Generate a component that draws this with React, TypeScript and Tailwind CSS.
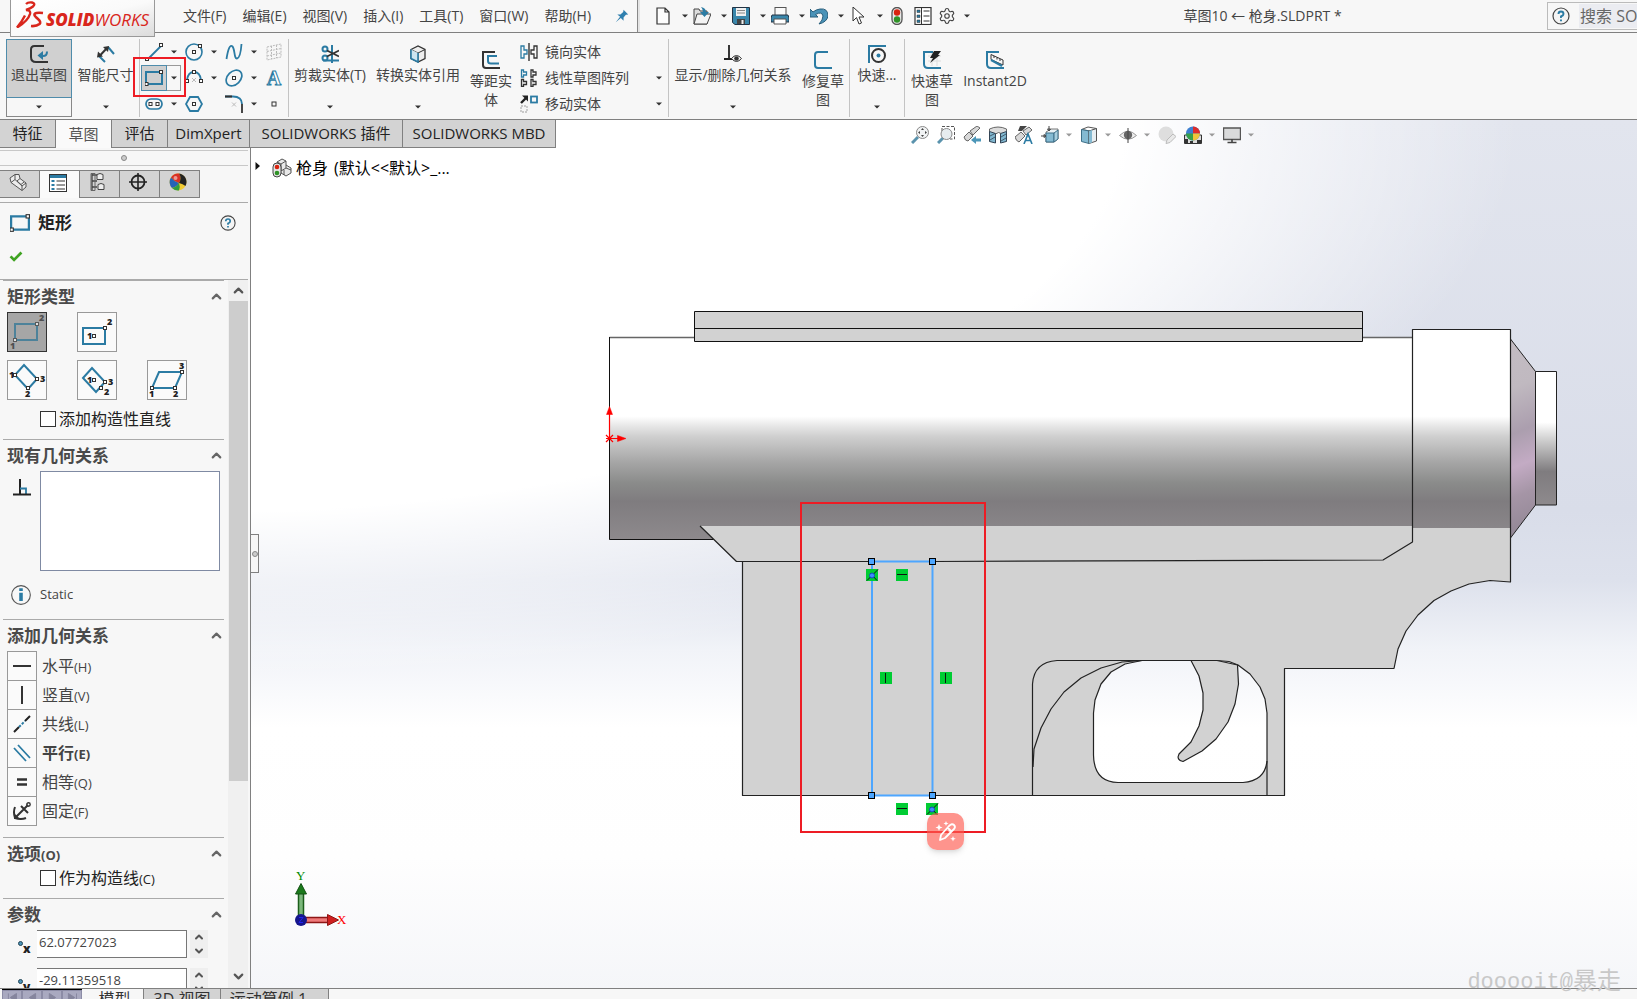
import type { ReactNode } from 'react';
import { ChevronDown, ChevronUp, Settings } from 'lucide-react';
import clsx from 'clsx';

const BLUE = '#2b7ba3';
const DARK = '#333333';

interface IconProps {
  children: ReactNode;
  className?: string;
}

function Icon({ children, className = 'size-[18px]' }: IconProps) {
  return (
    <svg viewBox="0 0 18 18" fill="none" className={clsx('shrink-0', className)} aria-hidden="true">
      {children}
    </svg>
  );
}

function Caret({ className = 'text-[#333]' }: { className?: string }) {
  return (
    <svg viewBox="0 0 6 4" className={clsx('h-1 w-1.5 shrink-0', className)} aria-hidden="true">
      <path d="M0 0.5h6L3 3.5z" fill="currentColor" />
    </svg>
  );
}

/** Small square end point used by most sketch icons */
function Node({ x, y }: { x: number; y: number }) {
  return <rect x={x - 1.5} y={y - 1.5} width="3" height="3" fill="#fff" stroke={DARK} />;
}

const icons = {
  exitSketch: (
    <>
      <path d="M14 1H4.500Q1 1 1 4.500V12q0 5 5 5h12" stroke={DARK} strokeWidth="2" />
      <path d="M17 6.500q0 4.500-4 4.500" stroke={BLUE} strokeWidth="2" />
      <path d="M7.500 10.500 13 6v9z" fill={BLUE} />
    </>
  ),
  dimension: (
    <>
      <path d="M2 11l6 6M11 2l6 7" stroke={BLUE} strokeWidth="2" />
      <path d="M3 10.500 10 3" stroke={DARK} strokeWidth="2" />
      <path d="M0 12.500l1-6 5 5zM12 1l-1 6-5-5z" fill={DARK} />
    </>
  ),
  line: (
    <>
      <path d="M2 17 17 2" stroke={BLUE} strokeWidth="1.800" />
      <Node x={2} y={16} />
      <Node x={16} y={2} />
    </>
  ),
  circle: (
    <>
      <circle cx="9" cy="9" r="8" stroke={BLUE} strokeWidth="1.600" />
      <Node x={9} y={9} />
      <Node x={15} y={3} />
    </>
  ),
  spline: <path d="M1.500 16C3 6 5 1 7.500 3.500S9 16 12 15.500 16 8 16.500 1" stroke={BLUE} strokeWidth="1.800" />,
  plane: (
    <path d="M2 4 16 1v13L2 17zM2 8.500l14-3M2 13l14-3M6.500 3v13M11.500 2v13" stroke="#bbb" strokeDasharray="2 1" />
  ),
  rect: (
    <>
      <path d="M1 3h16v12H1z" stroke={BLUE} strokeWidth="2" />
      <Node x={1.5} y={15} />
      <Node x={16} y={3} />
    </>
  ),
  arc: (
    <>
      <path d="M2 11Q3 3 9 3t7 8" stroke={BLUE} strokeWidth="1.800" />
      <path d="M7 9l4 4M11 9l-4 4" stroke="#bbb" />
      <Node x={9} y={3} />
      <Node x={2} y={12} />
      <Node x={16} y={12} />
    </>
  ),
  ellipse: (
    <>
      <ellipse cx="9" cy="9" rx="9" ry="6.500" transform="rotate(-45 9 9)" stroke={BLUE} strokeWidth="1.700" />
      <Node x={9} y={9} />
    </>
  ),
  slot: (
    <>
      <rect x="1" y="4" width="16" height="10" rx="5" stroke={BLUE} strokeWidth="1.700" />
      <Node x={5.5} y={9} />
      <Node x={12.5} y={9} />
    </>
  ),
  polygon: (
    <>
      <path d="M5 2h8l4 7-4 7H5L1 9z" stroke={BLUE} strokeWidth="1.800" />
      <Node x={9} y={9} />
    </>
  ),
  fillet: (
    <>
      <path d="M0 1.500h8Q17 1.500 17 9" stroke={BLUE} strokeWidth="1.800" />
      <path d="M0 1.500h7M17 9v9" stroke={DARK} strokeWidth="1.800" />
      <path d="M7 7.500l4 4M11 7.500l-4 4" stroke="#bbb" />
    </>
  ),
  point: <rect x="7" y="7" width="4" height="4" stroke={DARK} />,
  trim: (
    <>
      <circle cx="4" cy="4" r="2.500" stroke={BLUE} strokeWidth="2" />
      <circle cx="4" cy="13" r="2.500" stroke={BLUE} strokeWidth="2" />
      <path d="M11 0v18M2 15.500h16" stroke={BLUE} strokeWidth="2" />
      <path d="M6 5.500l12 6M6 11.500l12-6" stroke={DARK} strokeWidth="1.800" />
    </>
  ),
  convert: (
    <>
      <path d="M2 4.500 9 1l7 3.500v9L9 17l-7-3.500z" fill="#eee" stroke={DARK} strokeWidth="1.300" />
      <path d="M2 4.500 9 8l7-3.500M9 8v9" stroke={DARK} />
      <path d="M9 8v9l-7-3.500v-9" fill="#cde4ef" stroke={BLUE} strokeWidth="1.600" />
    </>
  ),
  offset: (
    <>
      <path d="M13 1H1v13q0 3 3 3h14" stroke={DARK} strokeWidth="2" />
      <path d="M15 5H6v5q0 2.500 3 2.500h8" stroke={BLUE} strokeWidth="2" />
    </>
  ),
  mirror: (
    <>
      <path d="M9 0v18" stroke={DARK} strokeWidth="1.400" />
      <path d="M1 3h3v4h3v4H4v4H1z" stroke={BLUE} strokeWidth="1.300" />
      <path d="M17 3h-3v4h-3v4h3v4h3z" stroke={DARK} strokeWidth="1.300" />
    </>
  ),
  pattern: (
    <>
      <path d="M1.500 1h2v2h3v3h-3v2h-2z" stroke={BLUE} strokeWidth="1.300" />
      <path
        d="M11 1h2v2h3v3h-3v2h-2zM1.500 10.500h2v2h3v3h-3v2h-2zM11 10.500h2v2h3v3h-3v2h-2z"
        stroke={DARK}
        strokeWidth="1.300"
      />
    </>
  ),
  move: (
    <>
      <path d="M1 8l5-5" stroke="#222" strokeWidth="2.400" />
      <path d="M2 0.500h6v6z" fill="#222" />
      <rect x="11" y="1.500" width="6" height="6" stroke={BLUE} strokeWidth="1.800" />
      <rect x="1" y="11" width="6" height="6" stroke="#bbb" strokeWidth="1.400" strokeDasharray="2 1" />
    </>
  ),
  relations: (
    <>
      <path d="M5 0v14M0 14h10" stroke="#222" strokeWidth="1.800" />
      <path d="M7.500 13.500q5-6 10 0-5 6-10 0z" fill="#fff" stroke={DARK} />
      <circle cx="12.500" cy="13.500" r="2.300" fill={DARK} />
    </>
  ),
  repair: <path d="M14 1H4q-3 0-3 3v10q0 3 3 3h14" stroke={BLUE} strokeWidth="2" />,
  snap: (
    <>
      <path d="M1 18V1h17" stroke={BLUE} strokeWidth="2" />
      <circle cx="10.500" cy="10.500" r="6.500" stroke={DARK} strokeWidth="2" />
      <circle cx="10.500" cy="10.500" r="2" fill={BLUE} />
    </>
  ),
  rapid: (
    <>
      <path d="M5 5h13M5 10h13M9 2v13M14 2v13" stroke="#ddd" />
      <path d="M10 1H1v12q0 4 4 4h13" stroke={BLUE} strokeWidth="2" />
      <path d="M11 0h7l-3 4h2L7 12l3-5H7z" fill="#222" />
    </>
  ),
  instant: (
    <>
      <path d="M13 1H1v12q0 4 4 4h13" stroke={BLUE} strokeWidth="2" />
      <path d="M5 3.500l12 5.500v5L5 8.500zM8 5v2M11 6.500v2M14 8v2" stroke={DARK} />
      <path d="M5 9l11 6" stroke={BLUE} strokeWidth="2" />
    </>
  ),
  newDoc: <path d="M3 1h8l4 4v12H3zM11 1v4h4" fill="#fdfdfd" stroke={DARK} strokeWidth="1.200" />,
  open: (
    <>
      <path d="M1 2h5l1 2h7v13H1z" fill="#ddd" stroke="#444" />
      <path d="M4 7h14l-4 10H1z" fill="#f4f4f4" stroke="#444" />
      <path d="M8 0q5 1 5 5h3l-4.500 5L7 5h3q0-3-2-5z" fill={BLUE} />
    </>
  ),
  save: (
    <>
      <path d="M0.500 0.500h17v17H3l-2.500-2z" fill="#3a87ab" stroke="#234" />
      <rect x="4" y="1" width="10" height="8" fill="#f1f1f1" />
      <path d="M5 3.500h8M5 6h8" stroke="#888" />
      <rect x="5" y="12" width="8" height="5" fill="#444" />
      <rect x="9.500" y="13" width="2" height="4" fill="#eee" />
    </>
  ),
  print: (
    <>
      <rect x="4" y="0.500" width="11" height="8" fill="#fafafa" stroke="#555" />
      <path d="M1 8h16l1 3v4H0v-4z" fill="#3a87ab" stroke="#234" />
      <path d="M3 12h12v5H3z" fill="#fff" stroke="#555" />
    </>
  ),
  undo: <path d="M0 2v8h8L5.500 7.500Q12 4 13 9q0 4-4 8 8-2 9-8Q18 1 10 2 6 2.500 3 5z" fill="#4a93b8" stroke="#275d7b" />,
  cursor: <path d="M4 0v14l3.500-3.500L10 17l2.500-1-2.500-6h5z" fill="#fff" stroke={DARK} />,
  traffic: (
    <>
      <rect x="4" y="0.500" width="10" height="17" rx="5" fill="#e8e8e8" stroke="#555" strokeWidth="1.300" />
      <circle cx="9" cy="5.500" r="3.200" fill="#d9230f" />
      <circle cx="9" cy="12.500" r="3.200" fill="#2f9327" />
    </>
  ),
  options: (
    <>
      <rect x="1" y="0.500" width="16" height="17" fill="#fff" stroke={DARK} strokeWidth="1.200" />
      <path d="M7.500 1v16M9.500 4h6M9.500 9h6M9.500 14h6" stroke={DARK} />
      <path d="M3 3h3v2.500H3zM3 8h3v2.500H3zM3 13h3v2.500H3z" fill={BLUE} stroke={DARK} strokeWidth="0.500" />
    </>
  ),
  pin: <path d="M11 1l6 6-3 .5-3 3.500v4l-3.500-3.500L1 17l5.500-7L3 7h4l3.500-3z" fill="#2f7fae" />,
  help: (
    <>
      <circle cx="9" cy="9" r="8" fill="#f4f4f4" stroke="#444" strokeWidth="1.200" />
      <path d="M6.500 7Q6.500 4.500 9 4.500T11.500 7Q11.500 8.500 9 9.500v1.500M9 12.500v1.700" stroke={BLUE} strokeWidth="1.900" />
    </>
  ),
  zoomFit: (
    <>
      <path d="M1 17l6-6" stroke="#5a93ad" strokeWidth="3" />
      <circle cx="11.500" cy="6.500" r="6" fill="#f1f3f4" stroke="#888" />
      <path d="M11.500 2l1.500 2h-3zM11.500 11l1.500-2h-3zM7 6.500l2-1.500v3zM16 6.500l-2-1.500v3z" fill="#444" />
    </>
  ),
  zoomArea: (
    <>
      <path d="M5 5V0.500h12.500V13H13" stroke="#555" strokeDasharray="3 1.500" />
      <path d="M1 17l5-5" stroke="#5a93ad" strokeWidth="3" />
      <circle cx="9.500" cy="8" r="5.500" fill="#e6ecef" stroke="#888" />
    </>
  ),
  prevView: (
    <>
      <path d="M1 11 6 6l4 4-5 5q-3 0-4-4zM7 5l7-5 3 2-7 7z" fill="#d8d8d8" stroke="#666" />
      <path d="M18 12.500v3h-5V18l-5-4 5-4v2.500z" fill="#4c96b8" />
    </>
  ),
  section: (
    <>
      <path d="M0.500 3Q9-1 17.500 3v12l-4 1V8Q9 5 6.500 8v8l-6-1z" fill="#dcdcdc" stroke="#666" />
      <path d="M0.500 5.500l6 2V17l-6-1.500zM11.500 7.500l6-2v10l-6 1.500z" fill="#7fb6cf" stroke="#345" />
      <path d="M1 10l5-2.500M1 14l5-3M12 11l5-3M12 15l5-3" stroke="#345" strokeWidth="0.800" />
    </>
  ),
  dynamicView: (
    <>
      <path d="M0 11l6-5 4 4-6 6q-3-1-4-5zM8 5l6-4 3 3-6 5z" fill="#d8d8d8" stroke="#666" />
      <path d="M5 0h7L7 5H3z" fill="#444" />
      <path d="M9 18l4-10 4 10M10.500 14.500h5" stroke={BLUE} strokeWidth="1.600" />
    </>
  ),
  orientation: (
    <>
      <path d="M5 6l5-3h7v10l-4 3H5z" fill="#e8f1f5" stroke="#777" />
      <path d="M5 7h8v9H5z" fill="#84bad2" stroke="#3d6f88" />
      <path d="M13 7l4-3v9l-4 3z" fill="#a8cfdf" stroke="#3d6f88" />
      <path d="M8 0v4M0 10h4M6.500 3 8 5l1.500-2zM3 8.500 5 10l-2 1.500z" stroke="#444" />
    </>
  ),
  displayStyle: (
    <>
      <path d="M1.500 3.500 8 1l8.500 1.500-6 2.500z" fill="#fff" stroke="#555" />
      <path d="M1.500 3.500 9 5v12.500l-7.500-2z" fill="#84bad2" stroke="#3d6f88" />
      <path d="M9 5l7.500-2.500V15L9 17.500z" fill="#e6eef2" stroke="#555" />
      <path d="M9 5l3-1v12.500l-3 1z" fill="#84bad2" />
    </>
  ),
  eye: (
    <>
      <path d="M0.500 9.500Q9 1 17.500 9.500 9 17 0.500 9.500z" fill="#eee" stroke="#999" />
      <circle cx="9" cy="9" r="4.200" fill="#666" />
      <path d="M9 2v15" stroke="#444" />
    </>
  ),
  appearance: (
    <>
      <circle cx="8" cy="8" r="7.500" fill="#dedede" />
      <path d="M9 14l6-6 3 2.500-6 6-4 1z" fill="#e9e9e9" stroke="#bbb" />
    </>
  ),
  scene: (
    <>
      <path d="M0.500 9h17v8.500H0.500z" fill="#ddd" stroke="#333" />
      <path d="M1 13h3v4H1zM6 15h3v2H6zM13 14h4v3h-4z" fill="#333" />
      <circle cx="9" cy="7.500" r="7" fill="#3d7fd0" />
      <path d="M9 .5a7 7 0 0 1 7 7H9z" fill="#dc2c2c" />
      <path d="M9 7.500h7a7 7 0 0 1-7 7z" fill="#eec63a" />
      <path d="M9 7.500v7a7 7 0 0 1-7-7z" fill="#36a04a" />
    </>
  ),
  monitor: (
    <>
      <path d="M0.500 2h17v11.500H0.500z" fill="#d9dadb" stroke="#555" strokeWidth="1.400" />
      <path d="M9 13v3M4.500 16.500h9" stroke="#444" strokeWidth="1.600" />
    </>
  ),
  part: (
    <>
      <path d="M1 5 6 1.500h4l1 4 6 4.500v4l-4 3.500L2 9.500z" fill="#ececec" stroke="#555" />
      <path d="M6 1.500v5L2 9.500M6 6.500l7 6.500v4.500M13 13l4-3M11 5.500 8 8l4 3.500 3-2.500" stroke="#555" />
    </>
  ),
  property: (
    <>
      <rect x="0.500" y="0.500" width="17" height="17" fill="#fff" stroke={DARK} />
      <rect x="1" y="1" width="16" height="3" fill={BLUE} />
      <path d="M2.500 6h3v2h-3zM2.500 10h3v2h-3zM2.500 14h3v2h-3z" fill={BLUE} />
      <path d="M7.500 7H16M7.500 11H16M7.500 15H16" stroke={DARK} />
    </>
  ),
  configuration: (
    <>
      <path d="M3 0.500v17M3 2h5M3 14h5M3 8h5" stroke="#444" strokeWidth="1.300" />
      <path d="M2 .5h4v17H2z" stroke="#666" />
      <path d="M8 1.500l3-1 3 1v5H8zM9 11.500l3-1 3 1v5H9z" fill="#eee" stroke="#444" />
    </>
  ),
  target: (
    <>
      <circle cx="9" cy="9" r="6.500" stroke="#222" strokeWidth="1.800" />
      <path d="M9 0v18M0 9h18" stroke="#222" strokeWidth="1.600" />
    </>
  ),
  ball: (
    <>
      <circle cx="9" cy="9" r="8.500" fill="#f1cb32" />
      <path d="M10 .5A8.500 8.500 0 0 0 2 4.500q3 4 8 5.500Q13 5 10 .5z" fill="#d93025" />
      <path d="M10 .5q3 4.500 0 9.500 4 1 6.500 3A8.500 8.500 0 0 0 10 .5z" fill="#222" />
      <path d="M2 4.500A8.500 8.500 0 0 0 3 15q5-1 7-5-5-1.500-8-5.500z" fill="#2563b8" />
      <path d="M3 15q5-1 7-5 1.500 4 0 7.500-4 .5-7-2.500z" fill="#2f9e3f" />
      <circle cx="6.500" cy="5" r="2" fill="#fff" opacity="0.500" />
    </>
  ),
  check: <path d="M2 9.500l4.500 4.500L16 4.500" stroke="#3fa321" strokeWidth="3.500" />,
  perpendicular: (
    <>
      <path d="M7 1v15" stroke="#222" strokeWidth="2" />
      <path d="M7 10.500h6V16" stroke={BLUE} strokeWidth="1.800" />
      <path d="M0 16.500h18" stroke="#222" strokeWidth="2" />
    </>
  ),
  info: (
    <>
      <circle cx="9" cy="9" r="8.400" fill="#f7f7f7" stroke="#555" />
      <path d="M9 3v2.500M9 7v7.500" stroke={BLUE} strokeWidth="3.200" />
    </>
  ),
  horizontal: <path d="M0 9h18" stroke="#333" strokeWidth="2" />,
  vertical: <path d="M9 0v18" stroke="#333" strokeWidth="2" />,
  collinear: (
    <>
      <path d="M1 17l5-5M12 6l5-5" stroke="#222" strokeWidth="2" />
      <path d="M6 12l6-6" stroke={BLUE} strokeWidth="2" strokeDasharray="2.500 1.500" />
    </>
  ),
  parallel: <path d="M1 4l12 13M5 1l12 13" stroke={BLUE} strokeWidth="1.800" />,
  equal: <path d="M4 6.500h10M4 11.500h10" stroke="#333" strokeWidth="2.400" />,
  fix: (
    <>
      <path d="M3 15 15 3M8 4l7 7" stroke="#333" strokeWidth="2" />
      <circle cx="15.500" cy="2.500" r="1.700" stroke="#333" strokeWidth="1.400" />
      <path d="M2 5q-2 5 0 11 6 2 11 0" stroke="#333" strokeWidth="2" />
      <path d="M1 11v6h6z" fill="#333" />
    </>
  ),
};

type IconName = keyof typeof icons;

const menus = ['文件(F)', '编辑(E)', '视图(V)', '插入(I)', '工具(T)', '窗口(W)', '帮助(H)'];

const quickAccess: { icon: IconName; label: string }[] = [
  { icon: 'newDoc', label: '新建' },
  { icon: 'open', label: '打开' },
  { icon: 'save', label: '保存' },
  { icon: 'print', label: '打印' },
  { icon: 'undo', label: '撤消' },
  { icon: 'cursor', label: '选择' },
];

function Logo() {
  return (
    <div className="z-10 ml-2.5 flex h-[37px] w-[145px] shrink-0 items-start self-start border border-t-0 border-[#999] bg-linear-to-br from-white via-[#fafafa] to-[#dcdcdc] pl-[5px]">
      <svg viewBox="0 0 28 28" fill="none" className="size-7 shrink-0" aria-hidden="true">
        <path d="M10 4q2-2 6-1.500 4 1 1 4-2.500 2-7 3.500 5 0 4 4-2 7-13 13.500 5-6 8-12" stroke="#d9261c" strokeWidth="2.400" />
        <path d="M27 13q-9-1-8.500 2 0 1 3.500 4t1.500 5q-3 2.500-8.500 2" stroke="#d9261c" strokeWidth="2.600" />
      </svg>
      <span className="mt-2 ml-0.5 font-['Open_Sans',sans-serif] text-[17px] leading-6 text-[#d9261c] italic">
        <b className="font-extrabold">SOLID</b>
        <span>WORKS</span>
      </span>
    </div>
  );
}

function TitleBar() {
  return (
    <header className="flex h-[33px] shrink-0 items-center border-b border-[#808080] bg-[#f7f7f7] text-sm text-[#444]">
      <Logo />
      <nav className="ml-7 flex shrink-0 gap-4">
        {menus.map((menu) => (
          <button key={menu} type="button" className="whitespace-nowrap">
            {menu}
          </button>
        ))}
      </nav>
      <button type="button" aria-label="固定菜单" className="ml-6">
        <Icon className="size-[14px]">{icons.pin}</Icon>
      </button>
      <div className="ml-2 h-8 w-[3px] shrink-0 border-l border-[#888] bg-[#e4e4e4]" />
      <div className="ml-[14px] flex shrink-0 items-center">
        {quickAccess.map(({ icon, label }) => (
          <button key={icon} type="button" aria-label={label} className="flex w-[39px] items-center gap-2.5">
            <Icon>{icons[icon]}</Icon>
            <Caret />
          </button>
        ))}
        <button type="button" aria-label="重建模型">
          <Icon>{icons.traffic}</Icon>
        </button>
        <button type="button" aria-label="文件属性" className="ml-2">
          <Icon>{icons.options}</Icon>
        </button>
        <button type="button" aria-label="选项" className="ml-1.5 flex items-center gap-2">
          <Settings className="size-[18px]" strokeWidth={1.5} />
          <Caret />
        </button>
      </div>
      <h1 className="flex-1 pl-2 text-center whitespace-nowrap">草图10 ← 枪身.SLDPRT *</h1>
      <label className="ml-auto flex h-7 w-[90px] shrink-0 items-center gap-[9px] overflow-hidden border border-r-0 border-[#bbb] pl-1">
        <Icon>{icons.help}</Icon>
        <input
          aria-label="搜索"
          placeholder="搜索 SOLIDWORKS"
          className="h-6 w-40 shrink-0 bg-[#ebecf1] px-px text-base placeholder:text-[#666]"
        />
      </label>
    </header>
  );
}

interface RibbonButtonProps {
  icon: IconName;
  label: string;
  className: string;
  menu?: boolean;
}

function RibbonButton({ icon, label, className, menu = false }: RibbonButtonProps) {
  return (
    <button
      type="button"
      className={clsx('flex h-[78px] shrink-0 flex-col items-center gap-0.5', menu ? 'pt-1.5 pb-2' : 'pt-3', className)}
    >
      <Icon>{icons[icon]}</Icon>
      <span className="leading-[19px]">{label}</span>
      {menu && <Caret className="mt-auto text-[#333]" />}
    </button>
  );
}

function RibbonDivider() {
  return <div className="h-[78px] w-px shrink-0 bg-[#c4c4c4]" />;
}

const sketchTools: (IconName | 'text')[] = [
  'line', 'circle', 'spline', 'plane',
  'rect', 'arc', 'ellipse', 'text',
  'slot', 'polygon', 'fillet', 'point',
];

function SketchGrid() {
  return (
    <div className="relative mx-px grid shrink-0 grid-cols-[40px_40px_40px_26px] grid-rows-[26px_26px_26px]">
      {sketchTools.map((tool, i) => {
        const active = tool === 'rect';
        return (
          <button key={tool} type="button" aria-label={tool} className="flex items-stretch">
            <span
              className={clsx(
                'flex w-[26px] items-center justify-center',
                active && 'border border-[#4f8cab] bg-[#cfcfcf]',
              )}
            >
              {tool === 'text' ? (
                <svg viewBox="0 0 18 24" className="h-6 w-[18px]" aria-hidden="true">
                  <text
                    x="9"
                    y="19"
                    textAnchor="middle"
                    fill="#fff"
                    stroke={BLUE}
                    className="font-['Liberation_Serif',serif] text-[20px] font-bold"
                  >
                    A
                  </text>
                </svg>
              ) : (
                <Icon>{icons[tool]}</Icon>
              )}
            </span>
            {i % 4 !== 3 && (
              <span
                className={clsx(
                  'flex w-[14px] items-center justify-center',
                  active && 'border border-l-0 border-[#999]',
                  tool === 'polygon' && 'invisible',
                )}
              >
                <Caret />
              </span>
            )}
          </button>
        );
      })}
      <div className="pointer-events-none absolute top-[18px] -left-2 h-10 w-[53px] border-2 border-[#ed1c24]" />
    </div>
  );
}

const editTools: { icon: IconName; label: string; menu: boolean }[] = [
  { icon: 'mirror', label: '镜向实体', menu: false },
  { icon: 'pattern', label: '线性草图阵列', menu: true },
  { icon: 'move', label: '移动实体', menu: true },
];

function Ribbon() {
  return (
    <section className="flex h-[87px] shrink-0 items-start overflow-hidden border-b border-[#808080] bg-[#f7f7f7] pt-1.5 pl-1.5 text-sm text-[#444]">
      <button type="button" className="flex h-[78px] w-[66px] shrink-0 flex-col">
        <span className="flex h-[59px] w-full flex-col items-center gap-0.5 border border-[#4f8cab] bg-[#d0d0d0] pt-[5px]">
          <Icon>{icons.exitSketch}</Icon>
          <span className="leading-[19px]">退出草图</span>
        </span>
        <span className="flex w-full flex-1 items-center justify-center border border-t-0 border-[#888]">
          <Caret />
        </span>
      </button>
      <RibbonButton icon="dimension" label="智能尺寸" menu className="w-[67px]" />
      <RibbonDivider />
      <SketchGrid />
      <RibbonDivider />
      <RibbonButton icon="trim" label="剪裁实体(T)" menu className="w-[82px]" />
      <RibbonButton icon="convert" label="转换实体引用" menu className="w-[94px]" />
      <RibbonButton icon="offset" label="等距实体" className="w-[52px] px-1" />
      <div className="flex w-[151px] shrink-0 flex-col pl-[3px]">
        {editTools.map(({ icon, label, menu }) => (
          <button key={icon} type="button" className="flex h-[26px] items-center pr-1.5">
            <Icon>{icons[icon]}</Icon>
            <span className="ml-[7px]">{label}</span>
            {menu && <Caret className="ml-auto text-[#333]" />}
          </button>
        ))}
      </div>
      <RibbonDivider />
      <RibbonButton icon="relations" label="显示/删除几何关系" menu className="w-32" />
      <RibbonButton icon="repair" label="修复草图" className="w-[52px] px-1" />
      <RibbonDivider />
      <RibbonButton icon="snap" label="快速..." menu className="w-[54px]" />
      <RibbonDivider />
      <RibbonButton icon="rapid" label="快速草图" className="w-[54px] px-1" />
      <RibbonButton icon="instant" label="Instant2D" className="w-[72px]" />
    </section>
  );
}

const commandTabs = [
  { label: '特征', width: 'w-14' },
  { label: '草图', width: 'w-14' },
  { label: '评估', width: 'w-14' },
  { label: 'DimXpert', width: 'w-[82px]' },
  { label: 'SOLIDWORKS 插件', width: 'w-[153px]' },
  { label: 'SOLIDWORKS MBD', width: 'w-[153px]' },
];

const viewTools: { icon: IconName; label: string; menu?: boolean }[] = [
  { icon: 'zoomFit', label: '整屏显示全图' },
  { icon: 'zoomArea', label: '局部放大' },
  { icon: 'prevView', label: '上一视图' },
  { icon: 'section', label: '剖面视图' },
  { icon: 'dynamicView', label: '动态注解视图' },
  { icon: 'orientation', label: '视图定向', menu: true },
  { icon: 'displayStyle', label: '显示样式', menu: true },
  { icon: 'eye', label: '隐藏所有类型', menu: true },
  { icon: 'appearance', label: '编辑外观' },
  { icon: 'scene', label: '应用布景', menu: true },
  { icon: 'monitor', label: '视图设定', menu: true },
];

function CommandTabs() {
  return (
    <div className="flex h-7 shrink-0">
      <div className="flex shrink-0 text-[15px] text-[#222]">
        {commandTabs.map(({ label, width }) => (
          <button
            key={label}
            type="button"
            className={clsx(
              'h-7 border-r border-[#808080] whitespace-nowrap',
              label === '草图' ? 'bg-[#fafafa] text-[#555]' : 'border-b bg-[#d3d3d3]',
              width,
            )}
          >
            {label}
          </button>
        ))}
      </div>
      <div className="flex flex-1 items-center justify-center gap-2 pt-0.5 pr-7">
        {viewTools.map(({ icon, label, menu }) => (
          <button key={icon} type="button" aria-label={label} className="flex items-center gap-[7px]">
            <Icon>{icons[icon]}</Icon>
            {menu && <Caret className="text-[#999]" />}
          </button>
        ))}
      </div>
    </div>
  );
}

interface SectionProps {
  title: string;
  hotkey?: string;
  children: ReactNode;
}

function Section({ title, hotkey, children }: SectionProps) {
  return (
    <section className="ml-[3px] w-[221px] border-t border-[#aaa] pb-3 pl-1">
      <div className="flex h-[31px] items-center justify-between">
        <h3 className="text-[17px] font-bold text-[#4a4a4a]">
          {title}
          {hotkey && <span className="text-[13px]">({hotkey})</span>}
        </h3>
        <button type="button" aria-label={`折叠 ${title}`}>
          <ChevronUp className="size-[15px] text-[#666]" strokeWidth={3.5} />
        </button>
      </div>
      {children}
    </section>
  );
}

function CheckOption({ label, hotkey }: { label: string; hotkey?: string }) {
  return (
    <label className="ml-[33px] flex h-[17px] items-center gap-[3px] text-base whitespace-nowrap text-[#222]">
      <input type="checkbox" className="size-4 appearance-none border border-[#333] bg-white" />
      <span>
        {label}
        {hotkey && <span className="text-[13px]">({hotkey})</span>}
      </span>
    </label>
  );
}

const num = "font-['Open_Sans',sans-serif] text-[9px] font-extrabold";

function RectTypeButton({ label, selected = false, children }: { label: string; selected?: boolean; children: ReactNode }) {
  return (
    <button
      type="button"
      aria-label={label}
      className={clsx('size-10 border', selected ? 'border-[#333] bg-[#a6a6a6]' : 'border-[#999] bg-[#fafafa]')}
    >
      <svg viewBox="0 0 38 38" fill="none" className={clsx('size-[38px]', selected && 'opacity-65')} aria-hidden="true">
        {children}
      </svg>
    </button>
  );
}

const relations: { icon: IconName; label: string; hotkey: string; bold?: boolean }[] = [
  { icon: 'horizontal', label: '水平', hotkey: 'H' },
  { icon: 'vertical', label: '竖直', hotkey: 'V' },
  { icon: 'collinear', label: '共线', hotkey: 'L' },
  { icon: 'parallel', label: '平行', hotkey: 'E', bold: true },
  { icon: 'equal', label: '相等', hotkey: 'Q' },
  { icon: 'fix', label: '固定', hotkey: 'F' },
];

function Coordinate({ axis, value }: { axis: string; value: string }) {
  return (
    <div className="mb-2.5 flex h-7">
      <label htmlFor={`coord-${axis}`} className="relative w-[30px] shrink-0 text-[#222]">
        <span className="absolute top-[11px] left-[11px] size-[5px] rounded-full border border-[#245] bg-[#4a93b8]" />
        <span className="absolute top-3 left-4 text-xs leading-[14px] font-extrabold">{axis}</span>
      </label>
      <input
        id={`coord-${axis}`}
        defaultValue={value}
        className="h-7 w-[150px] border border-l-0 border-[#777] bg-white px-0.5 pb-1 text-[13px] text-[#444]"
      />
      <div className="ml-[3px] flex w-[18px] flex-col bg-[#efefef] text-[#555]">
        <button type="button" aria-label="增加" className="flex flex-1 items-center justify-center">
          <ChevronUp className="size-3" strokeWidth={4} />
        </button>
        <button type="button" aria-label="减少" className="flex flex-1 items-center justify-center">
          <ChevronDown className="size-3" strokeWidth={4} />
        </button>
      </div>
    </div>
  );
}

const managerTabs: { icon: IconName; label: string }[] = [
  { icon: 'part', label: '设计树' },
  { icon: 'property', label: '属性' },
  { icon: 'configuration', label: '配置' },
  { icon: 'target', label: '尺寸专家' },
  { icon: 'ball', label: '外观' },
];

function PropertyPanel() {
  return (
    <aside className="flex w-[251px] shrink-0 flex-col overflow-hidden border-r border-[#808080] bg-[#f7f7f7] pt-0.5">
      <div className="flex h-4 w-[248px] shrink-0 items-center justify-center border-y border-[#c8c8c8]">
        <span className="size-1.5 rounded-full border border-[#888] bg-[#ccc]" />
      </div>
      <div className="mt-1 flex h-7 shrink-0">
        {managerTabs.map(({ icon, label }) => (
          <button
            key={icon}
            type="button"
            aria-label={label}
            className={clsx(
              'flex w-10 items-center border-t border-r border-[#808080] pb-1 pl-[9px]',
              icon === 'property' ? 'bg-[#fafafa]' : 'border-b bg-[#d3d3d3]',
            )}
          >
            <Icon>{icons[icon]}</Icon>
          </button>
        ))}
      </div>
      <div className="mt-1 w-[248px] shrink-0 border-y border-[#aaa] pb-2.5">
        <div className="flex h-10 items-center pr-3 pl-2.5">
          <Icon className="size-5">{icons.rect}</Icon>
          <h2 className="ml-2 text-[17px] font-bold text-[#222]">矩形</h2>
          <button type="button" aria-label="帮助" className="ml-auto">
            <Icon className="size-4">{icons.help}</Icon>
          </button>
        </div>
        <button type="button" aria-label="确定" className="ml-[9px] flex h-[26px] items-center">
          <Icon className="size-[14px]">{icons.check}</Icon>
        </button>
      </div>
      <div className="flex min-h-0 flex-1 overflow-hidden">
        <div className="w-[228px] shrink-0 overflow-hidden">
          <Section title="矩形类型">
            <div className="mb-2.5 grid w-fit grid-cols-3 gap-x-[30px] gap-y-2">
              <RectTypeButton label="边角矩形" selected>
                <path d="M7 11h22v16H7z" stroke="#1f6f95" strokeWidth="2" />
                <Node x={7} y={27} />
                <Node x={29} y={11} />
                <text x="31" y="8" fill="#222" className={num}>2</text>
                <text x="2" y="36" fill="#222" className={num}>1</text>
              </RectTypeButton>
              <RectTypeButton label="中心矩形">
                <path d="M5 15h22v16H5z" stroke={BLUE} strokeWidth="2" />
                <Node x={16} y={23} />
                <Node x={27} y={15} />
                <text x="29" y="12" fill="#222" className={num}>2</text>
                <text x="9" y="26" fill="#222" className={num}>1</text>
              </RectTypeButton>
              <span />
              <RectTypeButton label="3点边角矩形">
                <path d="M7 14l9-10 13 14-9 10z" stroke={BLUE} strokeWidth="2" />
                <Node x={7} y={14} />
                <Node x={29} y={18} />
                <Node x={20} y={27} />
                <text x="1" y="17" fill="#222" className={num}>1</text>
                <text x="32" y="21" fill="#222" className={num}>3</text>
                <text x="17" y="36" fill="#222" className={num}>2</text>
              </RectTypeButton>
              <RectTypeButton label="3点中心矩形">
                <path d="M5 17 14 7l13 14-9 10z" stroke={BLUE} strokeWidth="2" />
                <Node x={16} y={19} />
                <Node x={27} y={21} />
                <Node x={23} y={27} />
                <text x="9" y="22" fill="#222" className={num}>1</text>
                <text x="30" y="24" fill="#222" className={num}>3</text>
                <text x="26" y="34" fill="#222" className={num}>2</text>
              </RectTypeButton>
              <RectTypeButton label="平行四边形">
                <path d="M11 11h23l-7 16H4z" stroke={BLUE} strokeWidth="2" />
                <Node x={4} y={27} />
                <Node x={27} y={27} />
                <Node x={34} y={11} />
                <text x="1" y="36" fill="#222" className={num}>1</text>
                <text x="25" y="36" fill="#222" className={num}>2</text>
                <text x="31" y="8" fill="#222" className={num}>3</text>
              </RectTypeButton>
            </div>
            <CheckOption label="添加构造性直线" />
          </Section>
          <Section title="现有几何关系">
            <div className="flex">
              <Icon className="mt-[7px] ml-1.5 size-[18px]">{icons.perpendicular}</Icon>
              <textarea
                aria-label="现有几何关系"
                readOnly
                className="ml-[9px] h-[100px] w-[180px] resize-none border border-[#7f8aa3] bg-white"
              />
            </div>
            <p className="mt-3 flex h-6 items-center gap-[9px] pl-1 text-[13px] text-[#444]">
              <Icon className="size-5">{icons.info}</Icon>
              Static
            </p>
          </Section>
          <Section title="添加几何关系">
            {relations.map(({ icon, label, hotkey, bold }) => (
              <button
                key={icon}
                type="button"
                className={clsx('flex h-[29px] items-center text-base text-[#444]', bold && 'font-bold')}
              >
                <span className="flex h-[30px] w-[30px] items-center justify-center border border-[#999] bg-[#fafafa]">
                  <Icon>{icons[icon]}</Icon>
                </span>
                <span className="ml-[5px]">
                  {label}
                  <span className="text-[13px]">({hotkey})</span>
                </span>
              </button>
            ))}
          </Section>
          <Section title="选项" hotkey="O">
            <CheckOption label="作为构造线" hotkey="C" />
          </Section>
          <Section title="参数">
            <Coordinate axis="x" value="62.07727023" />
            <Coordinate axis="y" value="-29.11359518" />
          </Section>
        </div>
        <div className="flex w-5 shrink-0 flex-col items-center bg-[#f0f0f0] text-[#555]">
          <ChevronUp className="my-[3px] size-[15px] shrink-0" strokeWidth={3.5} />
          <div className="h-[480px] w-[19px] bg-[#cdcdcd]" />
          <ChevronDown className="mt-auto mb-1 size-[15px] shrink-0" strokeWidth={3.5} />
        </div>
      </div>
    </aside>
  );
}

const handles = [
  [872, 562],
  [933, 562],
  [872, 796],
  [933, 796],
];

const constraints: { x: number; y: number; kind: 'horizontal' | 'vertical' | 'coincident' }[] = [
  { x: 866, y: 569, kind: 'coincident' },
  { x: 896, y: 569, kind: 'horizontal' },
  { x: 880, y: 672, kind: 'vertical' },
  { x: 940, y: 672, kind: 'vertical' },
  { x: 896, y: 803, kind: 'horizontal' },
  { x: 926, y: 803, kind: 'coincident' },
];

function Model() {
  return (
    <svg
      viewBox="251 148 1386 840"
      preserveAspectRatio="xMinYMin meet"
      fill="none"
      className="block h-full w-full"
      role="img"
      aria-label="枪身"
    >
      <defs>
        <linearGradient id="barrel" gradientUnits="userSpaceOnUse" x1="0" x2="0" y1="337" y2="540">
          <stop offset="0.39" stopColor="#ffffff" />
          <stop offset="0.44" stopColor="#e6e6e6" />
          <stop offset="0.49" stopColor="#cfcfcf" />
          <stop offset="0.62" stopColor="#a5a5a5" />
          <stop offset="0.72" stopColor="#8a8b8a" />
          <stop offset="0.81" stopColor="#7f7c7f" />
          <stop offset="1" stopColor="#8e8a8d" />
        </linearGradient>
        <linearGradient id="neck" x1="0" x2="0" y1="0" y2="1">
          <stop offset="0.38" stopColor="#ffffff" />
          <stop offset="0.52" stopColor="#cccccc" />
          <stop offset="0.75" stopColor="#7f7c7f" />
          <stop offset="1" stopColor="#8e8a8d" />
        </linearGradient>
        <linearGradient id="cone" x1="0" x2="0.05" y1="0" y2="1">
          <stop offset="0" stopColor="#c3bcc3" />
          <stop offset="0.25" stopColor="#c0b9c0" />
          <stop offset="0.48" stopColor="#ab9eae" />
          <stop offset="0.65" stopColor="#c3abc4" />
          <stop offset="0.8" stopColor="#a595a6" />
          <stop offset="1" stopColor="#928795" />
        </linearGradient>
      </defs>

      {/* barrel, collar and muzzle */}
      <path d="M609.500 337H1412.500V540H609.500z" fill="url(#barrel)" />
      <path d="M1412.500 329.500H1510.500V540H1412.500z" fill="url(#barrel)" />
      <path d="M1510.500 339 1535.500 371.500V505L1510.500 538z" fill="url(#cone)" stroke="#222" />
      <path d="M1535.500 371.500H1556.500V505H1535.500z" fill="url(#neck)" stroke="#222" />
      <path d="M609.500 337.500H1412.500" stroke="#666" strokeWidth="1.500" />
      <path d="M609.500 337V539.500H714" stroke="#111" />

      {/* receiver with the trigger window cut out */}
      <path
        fillRule="evenodd"
        fill="#d2d2d2"
        d="M700 526H1412.500V528H1510.500V582L1490 580.500 1469 584 1451 591 1434 600.500 1418 615 1406 631 1398 649 1394 668.500H1284.500V795.500H742.500V562H736z M1142 660.500 1125 664 1111 672 1101 684 1095 700 1093.500 713V755Q1094 782 1118 782.500H1243Q1265 781 1267 761V713L1265 699 1260 687 1250 674 1238 665 1229 661.500 1217 660.500z"
      />
      <g stroke="#222" strokeWidth="1.200" strokeLinejoin="round">
        <path d="M700 526 736.500 561.500H872" />
        <path d="M742.500 562V795.500H1284.500V668.500H1394L1398 649 1406 631 1418 615 1434 600.500 1451 591 1469 584 1490 580.500 1510.500 582V329.500H1412.500V542L1383 560 932 561.500" />
        <path d="M1032.500 795V684Q1034 662 1057 660.500H1217L1229 661.500 1238 665 1250 674 1260 687 1265 699 1267 713V795" />
        <path d="M1142 660.500 1125 664 1111 672 1101 684 1095 700 1093.500 713V755Q1094 782 1118 782.500H1243Q1265 781 1267 761" />
        <path d="M1033 767 1034 749 1041 728 1051 709 1064 692 1081 678 1101 668 1122 662 1142 660.500" />
        <path
          fill="#d2d2d2"
          d="M1191 660.500 1199 676 1203 693V710L1199 726 1191 742 1179 754Q1176 760 1183 761.500L1202 751 1216 739 1228 722 1235 704 1238.500 684 1237.500 665 1217 660.500z"
        />
      </g>

      {/* top rail */}
      <path d="M694.500 311.500H1362.500V341.500H694.500zM694.500 328.500H1362.500" fill="#d2d2d2" stroke="#111" />

      {/* origin */}
      <g stroke="#f00" strokeWidth="1.200">
        <path d="M609.500 438.500V412M609.500 438.500H620M606 435l7 7M613 435l-7 7M606 438.500h7" />
        <path d="M609.500 406.500 612.500 414.500H606.500zM626 438.500 617.500 435.500V441.500z" fill="#f00" strokeWidth="0.500" />
      </g>

      {/* sketched rectangle */}
      <path d="M872 561.500H932.500V795.500H872z" stroke="#4da6ff" strokeWidth="2" />
      {constraints.map(({ x, y, kind }) => (
        <g key={`${x}-${y}`} transform={`translate(${x} ${y})`}>
          <rect width="12" height="12" fill="#00cc33" />
          {kind === 'horizontal' && <path d="M1 5.500h10" stroke="#111" />}
          {kind === 'vertical' && <path d="M5.500 1v10" stroke="#111" />}
          {kind === 'coincident' && (
            <>
              <path d="M1 11.500 12 0.500M6 6l5 5.500M4 4l2 2" stroke="#111" />
              <circle cx="6" cy="6.500" r="2.500" fill="#3d8bff" stroke="#1249b8" />
            </>
          )}
        </g>
      ))}
      {handles.map(([x, y]) => (
        <rect key={`${x}-${y}`} x={x - 3.5} y={y - 3.5} width="6" height="6" fill="#4da6ff" stroke="#000" />
      ))}
      <path d="M801 503H985V832H801z" stroke="#ed1c24" strokeWidth="2" />

      {/* view triad */}
      <path d="M298.500 893h5v24h-5z" fill="#7cb87c" stroke="#1b5e1b" strokeWidth="1.500" />
      <path d="M301 883.500 306.500 894h-11z" fill="#1b7a1b" stroke="#145214" />
      <path d="M304 917.500h24v5h-24z" fill="#ef7a7a" stroke="#8e1616" strokeWidth="1.500" />
      <path d="M338.500 920 327.500 914.500v11z" fill="#cf1f1f" stroke="#8e1616" />
      <circle cx="301" cy="920" r="6" fill="#15158c" />
      <path d="M299 917.500h4l-4 5h4" stroke="#2222ee" />
      <g className="font-['Liberation_Serif',serif] text-[13px]">
        <text x="296" y="880" fill="#008a00">Y</text>
        <text x="337" y="924" fill="#f00">X</text>
      </g>
    </svg>
  );
}

function Viewport() {
  return (
    <main className="relative min-w-0 flex-1 overflow-hidden">
      <Model />
      <button type="button" className="absolute top-2.5 left-1 flex items-center text-base leading-5 text-black">
        <svg viewBox="0 0 5 8" className="mb-1 h-2 w-[5px]" aria-hidden="true">
          <path d="M0.500 0 5 4 .5 8z" fill="#111" />
        </svg>
        <svg viewBox="0 0 20 20" fill="none" className="mr-1 ml-3 size-5" aria-hidden="true">
          <path d="M5 4l5-3 4 2v4l5 3v5l-5 3-5-3z" fill="#e9e9e9" stroke="#555" />
          <path d="M5 4l4 2 5-3M9 6v7l5-3 5 2M14 10V7M12 12v5" stroke="#555" />
          <rect x="1" y="5" width="8" height="14" rx="4" fill="#e4e4e4" stroke="#444" />
          <circle cx="5" cy="9" r="2.300" fill="#d9230f" />
          <circle cx="5" cy="15" r="2.300" fill="#2f9327" />
        </svg>
        <span>枪身</span>
        <span className="ml-1.5">(默认&lt;&lt;默认&gt;_...</span>
      </button>
      <button
        type="button"
        aria-label="收起面板"
        className="absolute top-[386px] left-0 flex h-[39px] w-2 items-center justify-center border border-l-0 border-[#808080] bg-[#f7f7f7]"
      >
        <span className="size-1.5 rounded-full border border-[#888] bg-[#ccc]" />
      </button>
      <button
        type="button"
        aria-label="魔法笔"
        className="absolute top-[665px] left-[676px] flex size-[37px] items-center justify-center rounded-[10px] bg-[#fd5a50]/65 shadow-md shadow-black/10"
      >
        <svg viewBox="0 0 22 22" fill="none" className="size-[22px]" aria-hidden="true">
          <path
            d="M5 19 6 14 14 5q3-3 5-1t0 4l-9 9zM12.500 6.500l4 4-3-1"
            stroke="#fff"
            strokeWidth="1.800"
            strokeLinejoin="round"
          />
          <path
            d="M4 3l1 2.500L7.500 6.500 5 7.500 4 10 3 7.500.5 6.500 3 5.500zM11 0l.7 1.800 1.800.7-1.800.7L11 5l-.7-1.800-1.800-.7 1.800-.7zM18 15l.8 2 2 .8-2 .8-.8 2-.8-2-2-.8 2-.8z"
            fill="#fff"
          />
        </svg>
      </button>
    </main>
  );
}

const navPaths = ['M6 2v9M15 2v9L8 6.500z', 'M14 2v9L7 6.500z', 'M7 2v9l7-4.500z', 'M6 2v9l7-4.500zM15 2v9'];

function BottomTabs() {
  return (
    <footer className="flex h-[11px] shrink-0 items-start overflow-hidden border-t border-[#808080] bg-[#f7f7f7] text-base leading-5 text-[#333]">
      <div className="ml-0.5 flex h-3 border-t border-black">
        {navPaths.map((d, i) => (
          <button key={d} type="button" aria-label={`工作表 ${i + 1}`} className="w-5 border border-[#8c8ca6] bg-[#a9a9c0]">
            <svg viewBox="0 0 20 13" className="h-[13px] w-[18px]" aria-hidden="true">
              <path d={d} fill="#85859d" stroke="#85859d" />
            </svg>
          </button>
        ))}
      </div>
      <button type="button" className="w-[62px] shrink-0 border-r border-[#808080] pl-1 whitespace-nowrap">
        模型
      </button>
      <button type="button" className="w-[77px] shrink-0 border-r border-[#808080] bg-[#d3d3d3] whitespace-nowrap">
        3D 视图
      </button>
      <button
        type="button"
        className="w-[108px] shrink-0 border-r border-[#808080] bg-[#d3d3d3] pr-3 whitespace-nowrap"
      >
        运动算例 1
      </button>
    </footer>
  );
}

export default function App() {
  return (
    <div className="relative flex h-screen flex-col overflow-hidden bg-white font-['Open_Sans','Noto_Sans_CJK_SC',sans-serif]">
      <TitleBar />
      <Ribbon />
      <div className="flex min-h-0 flex-1 flex-col bg-[radial-gradient(ellipse_1320px_560px_at_200px_0px,#ffffff_70%,rgba(255,255,255,0)_100%),linear-gradient(to_bottom,#e2e5ee_0%,#d9dde9_45%,#dde1ec_53%,#f1f3f8_61%,#ffffff_70%,#fefefe_85%,#f5f6f9_100%)]">
        <CommandTabs />
        <div className="flex min-h-0 flex-1">
          <PropertyPanel />
          <Viewport />
        </div>
      </div>
      <BottomTabs />
      <p className="pointer-events-none absolute right-4 bottom-1 flex items-end font-['Liberation_Mono','Noto_Sans_CJK_SC',monospace] text-[22px] leading-6 text-[#c8c8c8]">
        dooooit@<span className="text-2xl leading-6">暴走</span>
      </p>
    </div>
  );
}
